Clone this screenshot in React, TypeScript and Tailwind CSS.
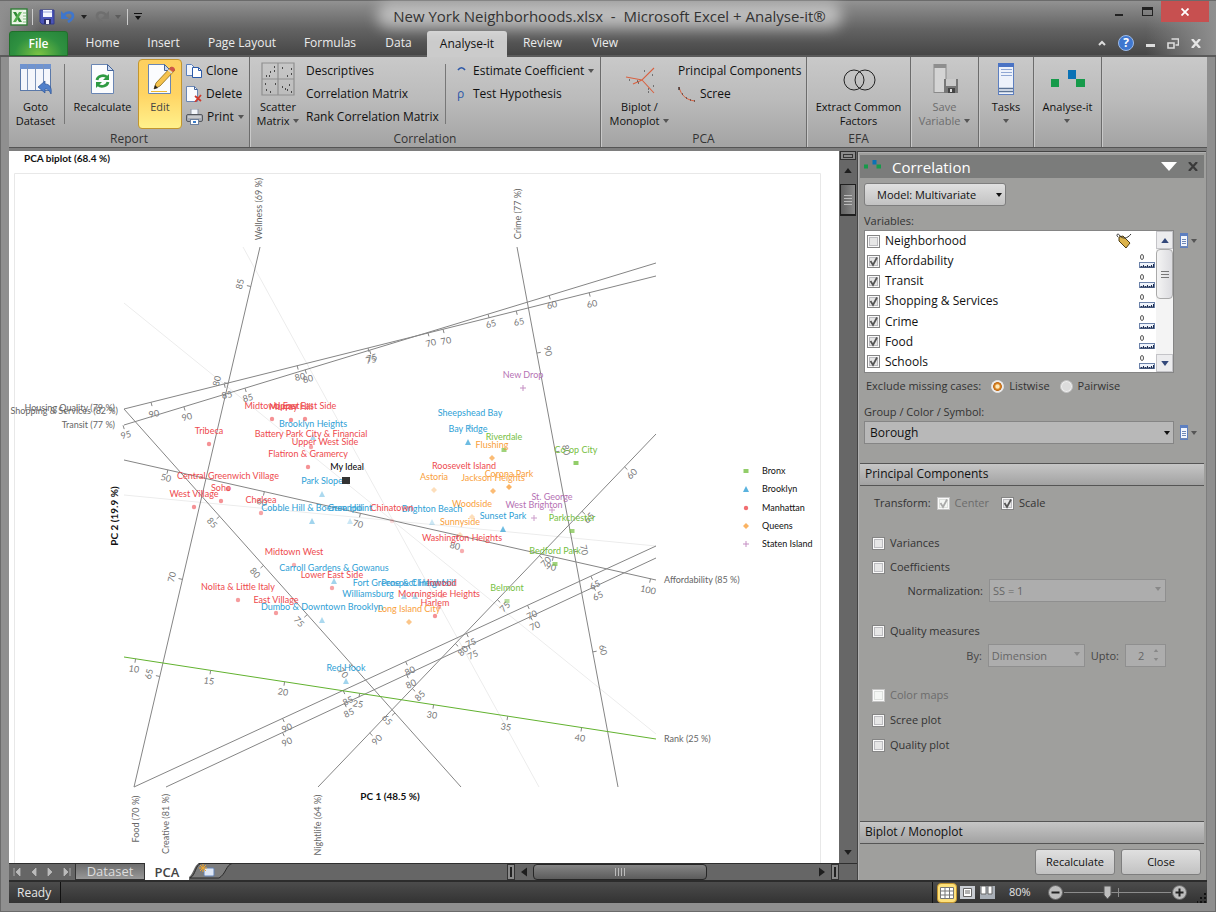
import React, { useState } from 'react';

// ---------- shared styles ----------

const ui = "font-['Open_Sans','Noto_Sans',sans-serif]";
const smallButton = 'flex h-[23px] items-center gap-1 whitespace-nowrap text-left text-[12px]';

const Caret: React.FC<{ className?: string }> = ({ className = 'text-[#555]' }) => (
  <svg viewBox="0 0 6 4" className={`inline-block h-1 w-1.5 shrink-0 ${className}`}>
    <path d="M0 0h6L3 4z" fill="currentColor" />
  </svg>
);

// ---------- icons ----------

const ExcelIcon = () => (
  <svg viewBox="0 0 18 18" className="h-[18px] w-[18px]">
    <rect x="1" y="1" width="16" height="16" fill="#f4f9f2" stroke="#2f7d35" strokeWidth="1.4" />
    <path d="M13 5h3M13 8h3M13 11h3M13 14h3" stroke="#7ab874" />
    <rect x="2" y="2" width="11" height="13" fill="#e6f3e0" />
    <path d="M3 4h3l6 10H9z" fill="#2f8a35" />
    <path d="M9 4h3L6 14H3z" fill="#53ad4d" />
  </svg>
);

const SaveIcon = () => (
  <svg viewBox="0 0 16 16" className="h-4 w-4">
    <path d="M1 1h14v14H3l-2-2z" fill="#4b55b8" stroke="#343c8c" />
    <rect x="4" y="1" width="9" height="7" fill="#f4f6ff" />
    <path d="M4 3h9" stroke="#9aa6dd" />
    <rect x="5" y="10" width="7" height="5" fill="#2b2f68" />
    <rect x="7" y="11" width="3" height="4" fill="#eef" />
  </svg>
);

const UndoIcon: React.FC<{ redo?: boolean }> = ({ redo }) => (
  <svg viewBox="0 0 14 13" className={`h-[13px] w-3.5 ${redo ? '-scale-x-100' : ''}`}>
    <path d="M3 5C6 1 12 2 12 6c0 3-2 4-5 6" fill="none" stroke={redo ? '#6f6f6f' : '#3f76cc'} strokeWidth="2.6" />
    <path d="M0 1v8h8z" fill={redo ? '#6f6f6f' : '#3f76cc'} />
  </svg>
);

const GotoIcon = () => (
  <svg viewBox="0 0 34 32" className="h-8 w-[34px]">
    <rect x="1.5" y="1.5" width="30" height="26" fill="#f4f6fb" stroke="#5a78a8" />
    <rect x="1" y="1" width="31" height="5" fill="#6f93cf" />
    <path d="M8.5 1v26M16.5 1v26M24.5 1v26" stroke="#7d94ba" />
    <path d="M19 24l7-6v3c5 0 7 4 6 10-2-4-3-5-6-5v4z" fill="#4f7fca" stroke="#2d5596" strokeWidth=".7" />
  </svg>
);

const Page: React.FC<{ children?: React.ReactNode }> = ({ children }) => (
  <svg viewBox="0 0 32 32" className="h-8 w-8">
    <path d="M4.5 1.5h16l6 6v23h-22z" fill="#fbfcfe" stroke="#6a86b4" />
    <path d="M20.5 1.5v6h6z" fill="#c9d7ee" stroke="#45659a" />
    {children}
  </svg>
);

const RecalcIcon = () => (
  <Page>
    <path d="M10 17a6 5 0 0 1 10-3" fill="none" stroke="#2f9a43" strokeWidth="2.8" />
    <path d="M22 11v6h-6z" fill="#2f9a43" />
    <path d="M21 19a6 5 0 0 1-10 3" fill="none" stroke="#2f9a43" strokeWidth="2.8" />
    <path d="M9 25v-6h6z" fill="#2f9a43" />
  </Page>
);

const EditIcon = () => (
  <Page>
    <path d="M7 28.5h16" stroke="#efb92f" />
    <path d="M10 26l2-6L27 4l4 3-15 16z" fill="#f6c34d" stroke="#8b6914" strokeWidth=".8" />
    <path d="M25 6l2-2c2-1 4 1 4 3l-2 2z" fill="#cf5648" />
    <path d="M24 7l4 3" stroke="#ddd" strokeWidth="1.5" />
    <path d="M10 26l1-4 3 3z" fill="#222" />
  </Page>
);

const CloneIcon = () => (
  <svg viewBox="0 0 16 16" className="h-4 w-4">
    <path d="M.5 1.5h5l3 3v8h-8z" fill="#f2f6fd" stroke="#5b80bd" />
    <path d="M6.500 4.500h6l3 3v7h-9z" fill="#fff" stroke="#2c5aa8" />
    <path d="M12.5 4.500v3h3" fill="none" stroke="#2c5aa8" />
  </svg>
);

const DeleteIcon = () => (
  <svg viewBox="0 0 16 16" className="h-4 w-4">
    <path d="M.5.5h8l3 3v12H.5z" fill="#fafcff" stroke="#6a86b4" />
    <path d="M8.500.5v3h3" fill="none" stroke="#45659a" />
    <path d="M9 10l6 5M15 9l-6 7" stroke="#d13a2c" strokeWidth="1.8" />
  </svg>
);

const PrintIcon = () => (
  <svg viewBox="0 0 17 16" className="h-4 w-[17px]">
    <path d="M5 0h7v6H5z" fill="#f3f6fb" stroke="#8a93a3" />
    <rect x=".5" y="5.5" width="16" height="7" rx="1.5" fill="#a7abb2" stroke="#55595f" />
    <path d="M2 8h13" stroke="#e8e8e8" />
    <rect x="4.5" y="10.5" width="8" height="5" fill="#fff" stroke="#6c7f9c" />
    <rect x="7" y="12" width="3" height="2" fill="#3b7cc9" />
  </svg>
);

const ScatterIcon = () => (
  <svg viewBox="0 0 34 34" className="h-[34px] w-[34px]">
    <path d="M1 1h32v32H1zM17 1v32M1 17h32" fill="none" stroke="#8f8f8f" strokeWidth="1.2" />
    <path
      d="M5 14h1M9 10h1M8 14h1M13 5h1M13 9h1M21 6h1M26 14h1M30 7h1M30 12h1M4 22h1M14 22h1M5 28h1M9 30h1M21 25h1M24 27h1M26 28h1M28 23h1M30 30h1"
      stroke="#222"
      strokeWidth="1.4"
    />
  </svg>
);

const BiplotIcon = () => (
  <svg viewBox="0 0 32 32" className="h-8 w-8">
    <path d="M2 14l16 3L30 5M18 17l12 13M18 17L9 21" fill="none" stroke="#d9603f" strokeWidth="1.1" />
    <path d="M5 17h1M20 8h1M28 12h1M14 20h1M24 26h1M24 29h1M13 18h1M29 23h1" stroke="#222" />
  </svg>
);

const ScreeIcon = () => (
  <svg viewBox="0 0 18 16" className="h-4 w-[18px]">
    <path d="M1 1c2 8 7 13 16 14" fill="none" stroke="#d9603f" />
    <path d="M1 1v3M4 8h1M8 12h1M12 14h1M16 15h1" stroke="#222" strokeWidth="1.2" />
  </svg>
);

const CirclesIcon = () => (
  <svg viewBox="0 0 34 32" className="h-8 w-[34px]">
    <circle cx="12" cy="17" r="10" fill="none" stroke="#222" />
    <circle cx="23" cy="17" r="10" fill="none" stroke="#222" />
  </svg>
);

const SaveVariableIcon = () => (
  <svg viewBox="0 0 28 32" className="h-8 w-7">
    <rect x="3" y="1.5" width="12" height="28" fill="#d4d4d4" stroke="#8a8a8a" />
    <rect x="3" y="1" width="12" height="4" fill="#8e8e8e" />
    <rect x="13" y="16" width="14" height="14" fill="#777" />
    <rect x="15" y="16" width="10" height="7" fill="#c9c9c9" />
    <rect x="17" y="25" width="7" height="5" fill="#444" />
    <rect x="19" y="26" width="2" height="3" fill="#ddd" />
  </svg>
);

const TasksIcon = () => (
  <svg viewBox="0 0 18 32" className="h-8 w-[18px]">
    <rect x="1.5" y=".5" width="15" height="31" fill="#edf2fb" stroke="#5d7fc0" />
    <rect x="1" y="0" width="16" height="4" fill="#4a73c4" />
    <path d="M4 6.500h11M4 9.500h11M4 12.500h11" stroke="#8fa7d4" />
    <path d="M2 25.500h14M2 28.500h14" stroke="#5b7394" strokeWidth="1.5" />
  </svg>
);

const LogoIcon: React.FC<{ className: string }> = ({ className }) => (
  <svg viewBox="0 0 34 18" className={className}>
    <rect x="0" y="9" width="8" height="8" fill="#169a4a" />
    <rect x="17" y="0" width="8" height="9" fill="#0a72b5" />
    <rect x="25" y="9" width="9" height="8" fill="#169a4a" />
  </svg>
);

const RulerIcon = () => (
  <svg viewBox="0 0 16 16" className="h-4 w-4">
    <ellipse cx="3" cy="4" rx="1.5" ry="2.5" fill="none" stroke="#555" />
    <rect x=".5" y="9.5" width="15" height="5" fill="#eef3fb" stroke="#6b82aa" />
    <path d="M2.5 14v-1M4.500 14v-2M6.500 14v-1M8.500 14v-2M10.500 14v-1M12.500 14v-2M14.500 14v-3M1 14h14" stroke="#1c2c50" />
  </svg>
);

const TagIcon = () => (
  <svg viewBox="0 0 18 16" className="h-4 w-[18px]">
    <path d="M4 4l4-1 7 7-4 5-7-7z" fill="#dcb34b" stroke="#4d3c12" />
    <path d="M3 4C0 1 4 0 5 3c3 3 7 3 11-2" fill="none" stroke="#333" />
  </svg>
);

const ColumnMenu: React.FC<{ label: string }> = ({ label }) => (
  <button aria-label={label} className="flex items-center gap-[3px]">
    <svg viewBox="0 0 8 15" className="h-[15px] w-2">
      <rect x=".5" y=".5" width="7" height="14" fill="#f2f5fb" stroke="#5d7fc0" />
      <path d="M0 1.500h8" stroke="#5d7fc0" strokeWidth="3" />
      <path d="M2 6.500h4M2 8.500h4M2 10.500h4M0 13.500h8" stroke="#6f87b5" />
    </svg>
    <Caret />
  </button>
);

// ---------- window chrome ----------

const TitleBar = () => (
  <div className="relative flex h-[31px] items-center">
    <div className="flex flex-1 items-center gap-1 pl-[10px] pt-0.5">
      <ExcelIcon />
      <span className="h-4 w-px bg-[#ccc]" />
      <button aria-label="Save" className="ml-0.5"><SaveIcon /></button>
      <button aria-label="Undo" className="ml-0.5 flex items-center gap-1.5"><UndoIcon /><Caret className="text-[#222]" /></button>
      <button aria-label="Redo" className="ml-1 flex items-center gap-1.5"><UndoIcon redo /><Caret className="text-[#5c5c5c]" /></button>
      <span className="ml-0.5 h-4 w-px bg-[#ccc]" />
      <button aria-label="Customize" className="ml-0.5 flex flex-col items-center gap-0.5">
        <span className="h-px w-2 bg-[#111]" />
        <Caret className="text-[#111]" />
      </button>
    </div>
    <div className="relative">
      <span className="absolute -inset-x-4 inset-y-0 rounded-full bg-white/50 blur-[7px]" />
      <h1 className="relative whitespace-pre text-[15px] leading-[26px] text-[#333]">New York Neighborhoods.xlsx  -  Microsoft Excel + Analyse-it®</h1>
    </div>
    <div className="flex flex-1 items-start justify-end self-stretch pr-[7px]">
      <button aria-label="Minimize" className="flex h-[21px] w-7 items-center justify-center pt-2"><span className="h-0.5 w-2 bg-[#222]" /></button>
      <button aria-label="Maximize" className="flex h-[21px] w-7 items-center justify-center pt-0.5"><span className="h-[9px] w-[11px] border border-t-[3px] border-[#222]" /></button>
      <button aria-label="Close window" className="mt-px flex h-[21px] w-12 items-center justify-center bg-[#c75050]">
        <svg viewBox="0 0 8 8" className="h-2 w-2"><path d="M.5.5l7 7M7.500.5l-7 7" stroke="#fff" strokeWidth="1.8" /></svg>
      </button>
    </div>
  </div>
);

const tabs = [
  { name: 'Home', width: 'w-[61px]' },
  { name: 'Insert', width: 'w-[61px]' },
  { name: 'Page Layout', width: 'w-24' },
  { name: 'Formulas', width: 'w-20' },
  { name: 'Data', width: 'w-[57px]' },
  { name: 'Analyse-it', width: 'w-20' },
  { name: 'Review', width: 'w-[71px]' },
  { name: 'View', width: 'w-[54px]' },
];

const TabRow: React.FC<{ active: string; onSelect: (name: string) => void }> = ({ active, onSelect }) => (
  <div className="flex h-[26px] items-stretch border-b-2 border-[#5a5a5a] pl-[9px] pr-[15px] text-[12px]">
    <button className="-mb-px mr-1 w-[59px] rounded-t-[3px] border border-[#20702a] bg-[radial-gradient(ellipse_at_bottom,#7cc444,#2f9140_60%,#25823a)] font-semibold text-white">File</button>
    {tabs.map((tab) => (
      <button
        key={tab.name}
        onClick={() => onSelect(tab.name)}
        className={`${tab.width} ${active === tab.name ? '-mb-0.5 rounded-t-[3px] bg-[#cbcbcb] font-medium text-[#111]' : 'text-[#ececec]'}`}
      >
        {tab.name}
      </button>
    ))}
    <div className="flex flex-1 items-center justify-end gap-3 text-[#ddd]">
      <button aria-label="Collapse ribbon"><svg viewBox="0 0 8 6" className="h-1.5 w-2"><path d="M1 5l3-3 3 3" fill="none" stroke="#ddd" strokeWidth="2" /></svg></button>
      <button aria-label="Help" className="h-4 w-4 rounded-full border border-[#9dbbe8] bg-[#3f77cf] text-[12px] font-bold leading-[14px] text-white">?</button>
      <button aria-label="Minimize workbook"><span className="mt-1 block h-[3px] w-[9px] bg-[#ddd]" /></button>
      <button aria-label="Restore workbook">
        <svg viewBox="0 0 12 11" className="h-[11px] w-3"><path d="M4.500 1h7v6h-3M1 5h6v5H1z" fill="none" stroke="#ddd" strokeWidth="1.6" /></svg>
      </button>
      <button aria-label="Close workbook">
        <svg viewBox="0 0 10 9" className="h-[9px] w-2.5"><path d="M1 0l8 9M9 0L1 9" stroke="#e5e5e5" strokeWidth="2.4" /></svg>
      </button>
    </div>
  </div>
);

const Group: React.FC<{ label?: string; className: string; children: React.ReactNode }> = ({ label, className, children }) => (
  <div className={`flex h-[90px] shrink-0 flex-col border-r border-[#6c6c6c] shadow-[1px_0_0_#c9c9c9] ${className}`}>
    <div className="flex flex-1 items-start pt-0.5">{children}</div>
    <div className="h-4 text-center text-[12px] leading-4 text-[#333]">{label}</div>
  </div>
);

const BigButton: React.FC<{
  icon: React.ReactNode;
  lines: string[];
  menu?: boolean;
  disabled?: boolean;
  className?: string;
}> = ({ icon, lines, menu, disabled, className = '' }) => (
  <button
    disabled={disabled}
    className={`flex h-[70px] flex-col items-center border border-transparent pt-[3px] leading-[14px] ${disabled ? 'text-[#6d6d6d]' : 'text-[#111]'} ${className}`}
  >
    <span className="flex h-8 items-center">{icon}</span>
    <span className="mt-[5px] flex flex-col items-center whitespace-nowrap">
      <span>{lines[0]}</span>
      <span className="flex min-h-[14px] items-center gap-1">{lines[1]}{menu && <Caret />}</span>
    </span>
  </button>
);

const Ribbon = () => (
  <div className="mx-[9px] flex bg-gradient-to-b from-[#c9c9c9] via-[#bababa] to-[#a3a3a3] text-[11px] text-[#111]">
    <Group label="Report" className="w-[241px]">
      <BigButton icon={<GotoIcon />} lines={['Goto', 'Dataset']} className="w-[53px]" />
      <span className="mx-0.5 mt-[5px] h-[60px] w-px bg-[#777]" />
      <BigButton icon={<RecalcIcon />} lines={['Recalculate']} className="w-[71px]" />
      <BigButton icon={<EditIcon />} lines={['Edit']} className="w-11 rounded-sm !border-[#c2952f] bg-gradient-to-b from-[#fdd05f] via-[#ffd463] to-[#fff18c] !text-[#444]" />
      <div className="ml-1">
        <button className={smallButton}><CloneIcon />Clone</button>
        <button className={smallButton}><DeleteIcon />Delete</button>
        <button className={smallButton}><PrintIcon />Print<Caret /></button>
      </div>
    </Group>
    <Group label="Correlation" className="w-[351px]">
      <BigButton icon={<ScatterIcon />} lines={['Scatter', 'Matrix']} menu className="w-14" />
      <div className="w-[139px]">
        <button className={smallButton}>Descriptives</button>
        <button className={smallButton}>Correlation Matrix</button>
        <button className={smallButton}>Rank Correlation Matrix</button>
      </div>
      <span className="mt-[5px] h-[60px] w-px bg-[#777]" />
      <div className="ml-[11px]">
        <button className={smallButton}>
          <svg viewBox="0 0 12 12" className="h-3 w-3"><path d="M1 5c2-3 5-3 7 0" fill="none" stroke="#2b57a8" strokeWidth="1.6" /></svg>
          Estimate Coefficient <Caret />
        </button>
        <button className={smallButton}><span className="w-3 text-[#2b57a8]">ρ</span>Test Hypothesis</button>
      </div>
    </Group>
    <Group label="PCA" className="w-[206px]">
      <BigButton icon={<BiplotIcon />} lines={['Biplot /', 'Monoplot']} menu className="w-[77px]" />
      <div>
        <button className={smallButton}>Principal Components</button>
        <button className={smallButton}><ScreeIcon />Scree</button>
      </div>
    </Group>
    <Group label="EFA" className="w-[104px]">
      <BigButton icon={<CirclesIcon />} lines={['Extract Common', 'Factors']} className="w-full" />
    </Group>
    <Group className="w-[68px]">
      <BigButton icon={<SaveVariableIcon />} lines={['Save', 'Variable']} menu disabled className="w-full" />
    </Group>
    <Group className="w-[55px]">
      <BigButton icon={<TasksIcon />} lines={['Tasks']} menu className="w-full" />
    </Group>
    <Group className="w-[68px]">
      <BigButton icon={<LogoIcon className="h-[18px] w-[34px]" />} lines={['Analyse-it']} menu className="w-full" />
    </Group>
  </div>
);

// ---------- chart ----------

type Borough = 'bronx' | 'brooklyn' | 'manhattan' | 'queens' | 'staten';

const colors: Record<Borough, string> = {
  bronx: '#77c043',
  brooklyn: '#2f9fd6',
  manhattan: '#ee4a4e',
  queens: '#f9a03c',
  staten: '#b672b4',
};

// name, borough, label centre, strength of the marker
const points: [string, Borough, number, number, number][] = [
  ['New Drop', 'staten', 523, 375, 0.8],
  ['Sheepshead Bay', 'brooklyn', 470, 413, 0.3],
  ['Bay Ridge', 'brooklyn', 468, 429, 0.7],
  ['Riverdale', 'bronx', 504, 437, 0.7],
  ['Flushing', 'queens', 492, 445, 0.7],
  ['Co-op City', 'bronx', 576, 450, 0.8],
  ['Roosevelt Island', 'manhattan', 464, 466, 0],
  ['Corona Park', 'queens', 509, 474, 0.8],
  ['Astoria', 'queens', 434, 477, 0.35],
  ['Jackson Heights', 'queens', 493, 478, 0.7],
  ['Woodside', 'queens', 472, 504, 0.35],
  ['St. George', 'staten', 552, 497, 0.7],
  ['West Brighton', 'staten', 534, 505, 0.7],
  ['Sunset Park', 'brooklyn', 503, 516, 0.7],
  ['Parkchester', 'bronx', 572, 518, 0.7],
  ['Brighton Beach', 'brooklyn', 432, 509, 0.25],
  ['Sunnyside', 'queens', 460, 522, 0.3],
  ['Chinatown', 'manhattan', 392, 508, 0.2],
  ['Washington Heights', 'manhattan', 462, 538, 0.45],
  ['Bedford Park', 'bronx', 555, 551, 0.7],
  ['Midtown East', 'manhattan', 272, 406, 0.6],
  ['Murray Hill', 'manhattan', 291, 407, 0.6],
  ['Upper East Side', 'manhattan', 305, 406, 0.6],
  ['Brooklyn Heights', 'brooklyn', 313, 424, 0.4],
  ['Battery Park City & Financial', 'manhattan', 311, 434, 0.5],
  ['Upper West Side', 'manhattan', 325, 442, 0],
  ['Flatiron & Gramercy', 'manhattan', 308, 454, 0.6],
  ['Park Slope', 'brooklyn', 322, 481, 0.4],
  ['Central Greenwich Village', 'manhattan', 228, 476, 0.6],
  ['Soho', 'manhattan', 221, 488, 0.6],
  ['West Village', 'manhattan', 194, 494, 0.6],
  ['Tribeca', 'manhattan', 209, 431, 0.6],
  ['Chelsea', 'manhattan', 261, 500, 0.5],
  ['Cobble Hill & Boerum Hill', 'brooklyn', 312, 508, 0.45],
  ['Greenpoint', 'brooklyn', 350, 508, 0.25],
  ['Midtown West', 'manhattan', 294, 552, 0.45],
  ['Carroll Gardens & Gowanus', 'brooklyn', 334, 568, 0.45],
  ['Lower East Side', 'manhattan', 332, 575, 0.5],
  ['Fort Greene & Clinton Hill', 'brooklyn', 404, 583, 0.4],
  ['Prospect Heights', 'brooklyn', 415, 583, 0.4],
  ['Inwood', 'manhattan', 442, 583, 0.3],
  ['Williamsburg', 'brooklyn', 368, 594, 0],
  ['Morningside Heights', 'manhattan', 439, 594, 0.4],
  ['Harlem', 'manhattan', 435, 603, 0.6],
  ['Long Island City', 'queens', 409, 609, 0.6],
  ['Dumbo & Downtown Brooklyn', 'brooklyn', 322, 607, 0.4],
  ['Nolita & Little Italy', 'manhattan', 238, 587, 0.55],
  ['East Village', 'manhattan', 276, 600, 0.55],
  ['Belmont', 'bronx', 507, 588, 0.5],
  ['Red Hook', 'brooklyn', 346, 668, 0.45],
];

interface Axis {
  line: [number, number, number, number];
  color?: string;
  angle: number;
  ticks: [string, number, number][];
}

const axes: Axis[] = [
  { line: [260, 247, 134, 787], angle: -77, ticks: [['85', 240, 284], ['80', 217, 381], ['70', 172, 577], ['65', 149, 674]] },
  { line: [517, 247, 618, 787], angle: 79, ticks: [['90', 548, 351], ['80', 566, 450], ['70', 584, 550], ['60', 603, 650]] },
  {
    line: [124, 409, 656, 276],
    angle: -13,
    ticks: [['90', 154, 414], ['85', 227, 395], ['80', 300, 377], ['75', 371, 360], ['70', 446, 341], ['65', 519, 322], ['60', 592, 304]],
  },
  {
    line: [124, 425, 656, 263],
    angle: -16,
    ticks: [['95', 126, 435], ['90', 187, 417], ['85', 248, 398], ['80', 308, 379], ['75', 372, 358], ['70', 431, 343], ['65', 491, 324], ['60', 552, 305]],
  },
  {
    line: [124, 460, 656, 580],
    angle: 12,
    ticks: [['50', 166, 478], ['60', 262, 502], ['70', 358, 524], ['80', 455, 546], ['90', 551, 567], ['100', 648, 590]],
  },
  { line: [124, 409, 461, 787], angle: 48, ticks: [['85', 212, 523], ['80', 255, 573], ['75', 299, 622], ['70', 343, 673], ['65', 387, 720]] },
  {
    line: [318, 787, 656, 434],
    angle: -46,
    ticks: [['90', 377, 740], ['85', 420, 696], ['80', 463, 651], ['75', 505, 607], ['70', 546, 562], ['65', 589, 518], ['60', 632, 474]],
  },
  {
    line: [134, 787, 656, 546],
    angle: -25,
    ticks: [['90', 287, 728], ['85', 348, 701], ['80', 410, 671], ['75', 471, 643], ['70', 532, 615], ['65', 595, 585]],
  },
  {
    line: [166, 787, 656, 558],
    angle: -25,
    ticks: [['90', 287, 742], ['85', 349, 713], ['80', 411, 684], ['75', 473, 655], ['70', 535, 626], ['65', 598, 596]],
  },
  {
    line: [124, 657, 656, 739],
    color: '#62b22f',
    angle: 9,
    ticks: [['10', 134, 669], ['15', 209, 681], ['20', 283, 692], ['25', 358, 704], ['30', 432, 715], ['35', 506, 727], ['40', 580, 738]],
  },
];

const Marker: React.FC<{ kind: Borough; x: number; y: number; opacity: number }> = ({ kind, x, y, opacity }) => {
  const fill = colors[kind];
  if (kind === 'bronx') return <rect x={x - 2.5} y={y - 2} width="5" height="4" fill={fill} opacity={opacity} />;
  if (kind === 'brooklyn') return <path d={`M${x} ${y - 3}l3 6h-6z`} fill={fill} opacity={opacity} />;
  if (kind === 'manhattan') return <circle cx={x} cy={y} r="2.2" fill={fill} opacity={opacity} />;
  if (kind === 'queens') return <path d={`M${x} ${y - 3}l3 3-3 3-3-3z`} fill={fill} opacity={opacity} />;
  return <path d={`M${x - 3} ${y}h6M${x} ${y - 3}v6`} stroke={fill} opacity={opacity} />;
};

const AxisLine: React.FC<Axis> = ({ line, color = '#858585', angle, ticks }) => {
  const [x1, y1, x2, y2] = line;
  const length = Math.hypot(x2 - x1, y2 - y1);
  const ux = (x2 - x1) / length;
  const uy = (y2 - y1) / length;
  return (
    <g>
      <line x1={x1} y1={y1} x2={x2} y2={y2} stroke={color} />
      {ticks.map(([label, x, y]) => {
        // foot of the label on its axis
        const t = (x - x1) * ux + (y - y1) * uy;
        const fx = x1 + t * ux;
        const fy = y1 + t * uy;
        const d = Math.hypot(x - fx, y - fy) || 1;
        return (
          <g key={label}>
            <line x1={fx} y1={fy} x2={fx + ((x - fx) / d) * 4} y2={fy + ((y - fy) / d) * 4} stroke="#858585" />
            <text x={x} y={y + 3} textAnchor="middle" fill="#777" transform={`rotate(${angle} ${x} ${y})`}>{label}</text>
          </g>
        );
      })}
    </g>
  );
};

const sideLabels: [string, number, number][] = [
  ['Wellness (69 %)', 259, 209],
  ['Crime (77 %)', 518, 214],
  ['Food (70 %)', 136, 819],
  ['Creative (81 %)', 166, 824],
  ['Nightlife (64 %)', 318, 825],
];

const legend: [string, Borough, number][] = [
  ['Bronx', 'bronx', 471],
  ['Brooklyn', 'brooklyn', 489],
  ['Manhattan', 'manhattan', 508],
  ['Queens', 'queens', 526],
  ['Staten Island', 'staten', 544],
];

const Biplot = () => (
  <svg viewBox="9 151 830 712" role="img" aria-label="PCA biplot" className="min-w-0 flex-1 self-start bg-white font-['Lato','Open_Sans',sans-serif] text-[9px]">
    <text x="24" y="162" fill="#111" className="text-[10px] font-bold">PCA biplot (68.4 %)</text>
    <path d="M14.500 863V173.500h806V863" fill="none" stroke="#e8e8e8" />
    <path d="M243 247L539 787M124 303L656 734M124 495L656 546" fill="none" stroke="#ececec" />
    {axes.map((axis, i) => <AxisLine key={i} {...axis} />)}

    <g fill="#666">
      <text x="115" y="411" textAnchor="end">Housing Quality (79 %)</text>
      <text x="118" y="414" textAnchor="end">Shopping &amp; Services (82 %)</text>
      <text x="115" y="428" textAnchor="end">Transit (77 %)</text>
      <text x="664" y="583">Affordability (85 %)</text>
      <text x="664" y="742">Rank (25 %)</text>
      {sideLabels.map(([label, x, y]) => (
        <text key={label} x={x} y={y + 3} textAnchor="middle" transform={`rotate(-90 ${x} ${y})`}>{label}</text>
      ))}
    </g>

    {points.map(([name, kind, x, y, strength]) => (
      <g key={name}>
        {strength > 0 && <Marker kind={kind} x={x} y={y + 13} opacity={strength} />}
        <text x={x} y={y + 3} textAnchor="middle" fill={colors[kind]}>{name}</text>
      </g>
    ))}
    <text x="347" y="470" textAnchor="middle" fill="#000">My Ideal</text>
    <rect x="342" y="477" width="8" height="7" fill="#333" />

    <g fill="#111">
      <text x="390" y="800" textAnchor="middle" className="text-[10px] font-bold">PC 1 (48.5 %)</text>
      <text x="115" y="519" textAnchor="middle" transform="rotate(-90 115 516)" className="text-[10px] font-bold">PC 2 (19.9 %)</text>
      {legend.map(([label, kind, y]) => (
        <g key={label}>
          <Marker kind={kind} x={746} y={y} opacity={0.8} />
          <text x="762" y={y + 3}>{label}</text>
        </g>
      ))}
    </g>
  </svg>
);

// ---------- worksheet bars ----------

const VerticalScroll = () => (
  <div className="flex w-[18px] shrink-0 flex-col items-center bg-[#676767]">
    <span className="flex h-[9px] w-4 items-center justify-center border border-[#2e2e2e] bg-[#8a8a8a]"><span className="h-1 w-2.5 border border-[#333]" /></span>
    <button aria-label="Scroll up" className="mt-1 flex h-[13px] items-center"><Caret className="!h-[5px] !w-2.5 rotate-180 text-[#1e1e1e]" /></button>
    <span className="mt-[7px] flex h-8 w-4 flex-col items-center justify-center gap-0.5 border border-b-2 border-[#1f1f1f] bg-gradient-to-r from-[#626262] to-[#8a8a8a]">
      <i className="h-px w-2 bg-[#bbb]" /><i className="h-px w-2 bg-[#bbb]" /><i className="h-px w-2 bg-[#bbb]" /><i className="h-px w-2 bg-[#bbb]" />
    </span>
    <button aria-label="Scroll down" className="mt-auto"><Caret className="!h-[5px] !w-2.5 text-[#1e1e1e]" /></button>
  </div>
);

const navArrows: [string, string][] = [
  ['First sheet', 'M1 1v8M7 1v8L3 5z'],
  ['Previous sheet', 'M6 1v8L2 5z'],
  ['Next sheet', 'M2 1v8l4-4z'],
  ['Last sheet', 'M7 1v8M1 1v8l4-4z'],
];

const SheetBar = () => (
  <div className="flex h-[17px] items-stretch border-t border-[#2f2f2f] bg-[#666] pr-[18px]">
    <div className="flex w-[66px] items-center justify-around">
      {navArrows.map(([label, d]) => (
        <button key={label} aria-label={label}>
          <svg viewBox="0 0 8 10" className="h-2.5 w-2"><path d={d} fill="#bbb" stroke="#bbb" strokeWidth=".8" /></svg>
        </button>
      ))}
    </div>
    <button className="w-[70px] border border-t-0 border-[#333] bg-gradient-to-b from-[#6e6e6e] to-[#989898] text-[13px] leading-[15px] text-[#ddd]">Dataset</button>
    <button className="relative -mt-px w-11 bg-white text-[13px] font-semibold leading-4 text-[#444]">PCA</button>
    <svg viewBox="0 0 50 16" className="relative -mt-px h-4 w-[50px]">
      <path d="M0 0h10C4 3 4 15-3 15H0z" fill="#fff" />
      <path d="M4 15h26C37 11 37 2 43 .5H12C6 2 7 12 1 15z" fill="#7c7c7c" stroke="#2a2a2a" />
      <rect x="15" y="5" width="10" height="8" rx="1" fill="#dfe7f5" stroke="#6382b5" />
      <path d="M14 1v8M10 5h8M11 2l6 6M17 2l-6 6" stroke="#f0a62c" />
    </svg>
    <div className="ml-auto flex w-[332px] items-center">
      <span className="flex h-full w-2 items-center justify-center border border-[#333] bg-[#8a8a8a]"><i className="h-2.5 w-0.5 bg-[#222]" /></span>
      <button aria-label="Scroll left" className="flex w-[18px] justify-center"><Caret className="!h-1.5 !w-2.5 rotate-90 text-[#1e1e1e]" /></button>
      <span className="flex h-full w-[174px] items-center justify-center gap-0.5 rounded-sm border border-[#262626] bg-gradient-to-b from-[#858585] to-[#5c5c5c]">
        <i className="h-2 w-px bg-[#bbb]" /><i className="h-2 w-px bg-[#bbb]" /><i className="h-2 w-px bg-[#bbb]" /><i className="h-2 w-px bg-[#bbb]" />
      </span>
      <button aria-label="Scroll right" className="ml-auto mr-1 flex"><Caret className="!h-1.5 !w-2.5 -rotate-90 text-[#1e1e1e]" /></button>
      <span className="flex h-full w-2 items-center justify-center border border-[#333] bg-[#8a8a8a]"><i className="h-2.5 w-0.5 bg-[#222]" /></span>
    </div>
  </div>
);

// ---------- task pane ----------

const CheckBox: React.FC<{ label: string; defaultChecked?: boolean; disabled?: boolean; boxed?: boolean }> = ({
  label,
  defaultChecked,
  disabled,
  boxed,
}) => (
  <label className={`flex items-center gap-[5px] whitespace-nowrap ${disabled ? 'text-[#6c6c6c]' : boxed ? 'text-[12px] text-[#111]' : 'text-[#333]'}`}>
    <span className="relative flex h-[13px] w-[13px] shrink-0">
      <input
        type="checkbox"
        defaultChecked={defaultChecked}
        disabled={disabled}
        className="peer h-[13px] w-[13px] appearance-none border border-[#858585] bg-[#e6e6e6] shadow-[inset_0_0_0_1px_#fafafa,inset_0_0_0_2px_#bcbcc0] disabled:border-[#c4c4c4] disabled:bg-[#f4f6f4] disabled:shadow-[inset_0_0_0_1px_#fafafa,inset_0_0_0_2px_#dde0dd]"
      />
      <svg viewBox="0 0 13 13" className="pointer-events-none absolute inset-0 hidden h-[13px] w-[13px] text-[#555] peer-checked:block peer-disabled:text-[#aaa]">
        <path d="M3.500 6l2.500 4 4-7.500" fill="none" stroke="currentColor" strokeWidth="1.8" />
      </svg>
    </span>
    {label}
  </label>
);

const Radio: React.FC<{ label: string; defaultChecked?: boolean }> = ({ label, defaultChecked }) => (
  <label className="flex items-center gap-[5px]">
    <input
      type="radio"
      name="missing"
      defaultChecked={defaultChecked}
      className="h-[13px] w-[13px] appearance-none rounded-full border border-[#c6c6c6] bg-[#dcdcdc] shadow-[inset_0_0_0_1px_#eee] checked:border-[#e6e6e6] checked:bg-[radial-gradient(circle,#ffe9b8_20%,#dd8a2a_35%,#b9610c_55%,#eee_62%)]"
    />
    {label}
  </label>
);

const SectionTitle: React.FC<{ children: React.ReactNode }> = ({ children }) => (
  <h2 className="h-[23px] border-y border-[#555] bg-gradient-to-b from-[#c6c6c6] to-[#a2a2a2] pl-[5px] text-[12px] leading-5 text-[#111]">{children}</h2>
);

const variables = ['Affordability', 'Transit', 'Shopping & Services', 'Crime', 'Food', 'Schools'];
const paneButton = 'rounded-[3px] border border-[#7e7e7e] bg-gradient-to-b from-[#e0e0e0] to-[#c2c2c2] text-[#111]';
const dimField = 'appearance-none border border-[#8f8f8f] bg-[#adadad] text-[#666] opacity-100';

const TaskPane = () => (
  <aside className="mr-px flex w-[349px] shrink-0 flex-col border-l border-t border-[#444] bg-[#9f9f9d] px-0.5 pt-[3px] text-[11px] leading-4 text-[#333] shadow-[inset_1px_1px_0_#b0b0b0]">
    <div className="flex h-[23px] items-center bg-[#7b7c7b] px-1">
      <LogoIcon className="-mt-1 h-[9px] w-[17px]" />
      <h2 className="ml-[11px] flex-1 text-[15px] text-white">Correlation</h2>
      <button aria-label="Pane menu"><svg viewBox="0 0 16 9" className="h-[9px] w-4"><path d="M0 0h16L8 9z" fill="#fff" /></svg></button>
      <button aria-label="Close pane" className="ml-[11px] mr-0.5"><svg viewBox="0 0 10 9" className="h-[9px] w-2.5"><path d="M1 0l8 9M9 0L1 9" stroke="#3a3a3a" strokeWidth="2.2" /></svg></button>
    </div>

    <div className="flex flex-col px-1">
      <button className={`mt-[5px] flex h-[23px] w-[142px] items-center justify-between self-start pl-3 pr-0.5 ${paneButton}`}>
        <span>Model: Multivariate</span>
        <Caret className="!w-2 text-[#111]" />
      </button>

      <p className="mt-[7px]">Variables:</p>
      <div className="mt-px flex items-start gap-1.5">
        <div className="flex h-[143px] w-[310px] border border-[#858585] bg-white">
          <div className="flex flex-1 flex-col pl-0.5 pr-px">
            <div className="flex flex-1 items-center justify-between">
              <CheckBox label="Neighborhood" boxed />
              <span className="mr-[22px]"><TagIcon /></span>
            </div>
            {variables.map((name) => (
              <div key={name} className="flex flex-1 items-center justify-between">
                <CheckBox label={name} defaultChecked boxed />
                <RulerIcon />
              </div>
            ))}
          </div>
          <div className="flex w-[17px] flex-col bg-[#f4f4f4]">
            <button aria-label="List up" className="flex h-[18px] items-center justify-center border border-[#c4c4c8] bg-[#ececee]"><Caret className="!h-[5px] !w-2.5 rotate-180 text-[#33487a]" /></button>
            <span className="flex h-[50px] flex-col items-center justify-center gap-0.5 rounded-sm border border-[#aaa] bg-gradient-to-r from-[#f4f4f4] to-[#dcdce0]">
              <i className="h-px w-2 bg-[#777]" /><i className="h-px w-2 bg-[#777]" /><i className="h-px w-2 bg-[#777]" />
            </span>
            <button aria-label="List down" className="mt-auto flex h-[18px] items-center justify-center border border-[#c4c4c8] bg-[#ececee]"><Caret className="!h-[5px] !w-2.5 text-[#33487a]" /></button>
          </div>
        </div>
        <span className="mt-[3px]"><ColumnMenu label="Variable options" /></span>
      </div>

      <div className="mt-[5px] flex items-center gap-2.5 pl-0.5">
        <span>Exclude missing cases:</span>
        <Radio label="Listwise" defaultChecked />
        <Radio label="Pairwise" />
      </div>

      <label htmlFor="group" className="mt-2.5">Group / Color / Symbol:</label>
      <div className="mt-px flex items-center gap-1.5">
        <div className="relative w-[310px]">
          <select id="group" className="h-[23px] w-full appearance-none border border-[#858585] bg-[#b8b8b8] pl-[5px] text-[12px] text-[#111]"><option>Borough</option></select>
          <Caret className="pointer-events-none absolute right-1 top-2.5 text-[#111]" />
        </div>
        <ColumnMenu label="Group options" />
      </div>
    </div>

    <div className="mt-[19px]"><SectionTitle>Principal Components</SectionTitle></div>

    <div className="flex flex-col pl-3 pr-[38px]">
      <div className="mt-[9px] flex items-center gap-1.5 pl-0.5">
        <span>Transform:</span>
        <CheckBox label="Center" defaultChecked disabled />
        <span className="w-0" />
        <CheckBox label="Scale" defaultChecked />
      </div>
      <div className="mt-6 flex flex-col gap-2">
        <CheckBox label="Variances" />
        <CheckBox label="Coefficients" />
      </div>
      <div className="mt-1 flex items-center justify-end gap-1.5">
        <label htmlFor="norm">Normalization:</label>
        <div className="relative w-[177px]">
          <select id="norm" disabled className={`h-[23px] w-full pl-[3px] ${dimField}`}><option>SS = 1</option></select>
          <Caret className="pointer-events-none absolute right-[5px] top-2 text-[#888]" />
        </div>
      </div>
      <div className="mt-[21px]"><CheckBox label="Quality measures" /></div>
      <div className="mt-[5px] flex items-center justify-end gap-1.5 text-[#444]">
        <label htmlFor="by">By:</label>
        <div className="relative w-[97px]">
          <select id="by" disabled className={`h-[23px] w-full pl-[3px] ${dimField}`}><option>Dimension</option></select>
          <Caret className="pointer-events-none absolute right-[5px] top-2 text-[#888]" />
        </div>
        <label htmlFor="upto">Upto:</label>
        <div className="relative w-[41px]">
          <input id="upto" disabled defaultValue="2" className={`h-[23px] w-full pl-3 ${dimField}`} />
          <span className="pointer-events-none absolute right-[7px] top-[5px] flex flex-col gap-1.5">
            <Caret className="!h-[3px] rotate-180 text-[#888]" />
            <Caret className="!h-[3px] text-[#888]" />
          </span>
        </div>
      </div>
      <div className="mt-5 flex flex-col gap-[9px]">
        <CheckBox label="Color maps" disabled />
        <CheckBox label="Scree plot" />
        <CheckBox label="Quality plot" />
      </div>
    </div>

    <div className="mt-auto"><SectionTitle>Biplot / Monoplot</SectionTitle></div>
    <div className="flex justify-end gap-1.5 pb-[5px] pr-[3px] pt-[5px]">
      <button className={`h-[26px] w-20 ${paneButton}`}>Recalculate</button>
      <button className={`h-[26px] w-20 ${paneButton}`}>Close</button>
    </div>
  </aside>
);

// ---------- status bar ----------

const StatusBar = () => (
  <div className="mx-[9px] flex h-[23px] items-center border-t-2 border-[#2c2c2c] bg-gradient-to-b from-[#4c4c4c] to-[#333] text-[12px] text-[#e6e6e6]">
    <span className="w-[51px] pl-2">Ready</span>
    <span className="h-full w-px bg-[#111]" />
    <div className="ml-auto flex h-full items-center">
      <span className="h-full w-px bg-[#111]" />
      <button aria-label="Normal view" className="ml-1 flex h-5 w-5 items-center justify-center rounded-sm border border-[#c2952f] bg-[#fde07a]">
        <svg viewBox="0 0 14 12" className="h-3 w-3.5"><path d="M.5.5h13v11H.5zM.5 4h13M.5 8h13M5 .5v11M9.500.5v11" fill="#fff" stroke="#777" /></svg>
      </button>
      <button aria-label="Page layout view" className="ml-[3px]">
        <svg viewBox="0 0 15 13" className="h-[13px] w-[15px]"><rect width="15" height="13" fill="#c8ccd2" /><path d="M3.500 2.500h8v8h-8zM5 5h5M5 7h5" fill="#fff" stroke="#666" /></svg>
      </button>
      <button aria-label="Page break view" className="ml-[5px]">
        <svg viewBox="0 0 15 13" className="h-[13px] w-[15px]"><rect width="15" height="13" fill="#aab0b8" /><path d="M1 0h5v8H1zM8 0h4v8H8z" fill="#fff" stroke="#666" /></svg>
      </button>
      <span className="ml-3.5 w-[27px] text-[11px]">80%</span>
      <button aria-label="Zoom out" className="ml-3">
        <svg viewBox="0 0 15 15" className="h-[15px] w-[15px]"><circle cx="7.5" cy="7.5" r="7" fill="#bdbdbd" stroke="#666" /><path d="M3.500 7.500h8" stroke="#222" strokeWidth="2" /></svg>
      </button>
      <svg viewBox="0 0 109 15" className="h-[15px] w-[109px]">
        <path d="M1 7.500h107M55.500 3v9" stroke="#8c8c8c" />
        <path d="M41 1h7v9l-3.500 4L41 10z" fill="#bdbdbd" stroke="#555" />
      </svg>
      <button aria-label="Zoom in">
        <svg viewBox="0 0 15 15" className="h-[15px] w-[15px]"><circle cx="7.5" cy="7.5" r="7" fill="#bdbdbd" stroke="#666" /><path d="M3.500 7.500h8M7.500 3.500v8" stroke="#222" strokeWidth="2" /></svg>
      </button>
      <svg viewBox="0 0 10 10" className="ml-2.5 h-2.5 w-2.5 self-end"><path d="M7 1h2M7 5h2M3 5h2M7 9h2M3 9h2M0 9h1" stroke="#111" strokeWidth="2" /></svg>
    </div>
  </div>
);

const App: React.FC = () => {
  const [activeTab, setActiveTab] = useState('Analyse-it');

  return (
    <div className={`flex min-h-screen flex-col bg-[#8f8f8f] ${ui}`}>
      <header className="border-t border-[#6b6b6b] bg-[linear-gradient(to_right,#8f8f8f,transparent_40px,transparent_calc(100%-70px),#8f8f8f),linear-gradient(to_bottom,#929292,#636363_28px,#444_56px)]">
        <div className="-mt-px">
          <TitleBar />
          <TabRow active={activeTab} onSelect={setActiveTab} />
        </div>
      </header>
      <div className="flex flex-1 flex-col border-x border-b border-[#6b6b6b] pb-2">
        <div className="-mx-px flex flex-1 flex-col">
          <Ribbon />
          <div className="mx-[9px] h-1 border-t border-[#555] bg-[#7e7e7e]" />
          <main className="mx-[9px] flex flex-1 bg-[#7e7e7e]">
            <div className="flex min-w-0 flex-1 flex-col">
              <div className="flex flex-1 bg-white">
                <Biplot />
                <VerticalScroll />
              </div>
              <SheetBar />
            </div>
            <TaskPane />
          </main>
          <StatusBar />
        </div>
      </div>
    </div>
  );
};

export default App;
